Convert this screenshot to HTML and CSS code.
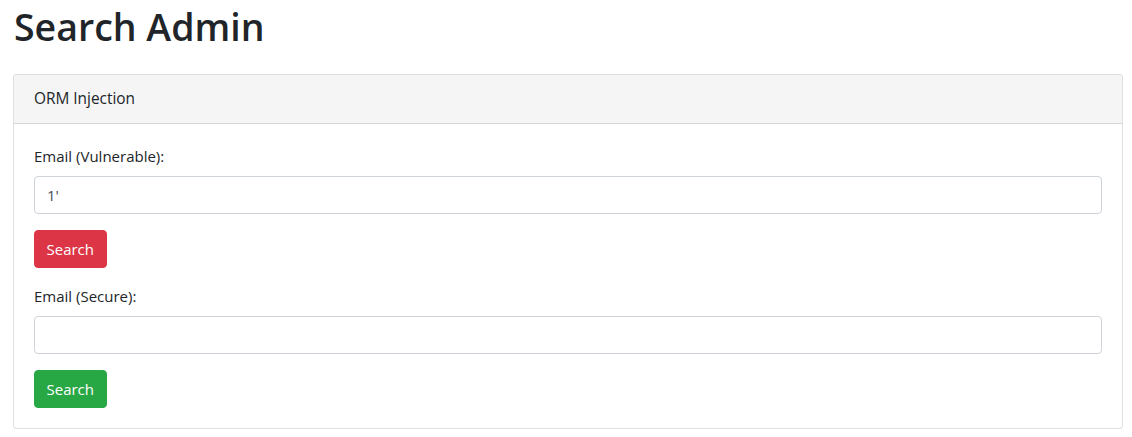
FILE: index.html
```html
<!DOCTYPE html>
<html lang="en">
<head>
<meta charset="utf-8">
<title>Search Admin</title>
<link rel="stylesheet" href="styles.css">
</head>
<body>
<div class="page">
  <h1 class="title">Search Admin</h1>
  <div class="card">
    <div class="card-header">ORM Injection</div>
    <div class="card-body">
      <form class="search-form">
        <label class="field-label" for="email-vuln">Email (Vulnerable):</label>
        <input class="form-control" id="email-vuln" type="text" value="1'">
        <button class="btn btn-danger" type="button">Search</button>
      </form>
      <form class="search-form">
        <label class="field-label" for="email-secure">Email (Secure):</label>
        <input class="form-control" id="email-secure" type="text" value="">
        <button class="btn btn-success" type="button">Search</button>
      </form>
    </div>
  </div>
</div>
</body>
</html>
```

FILE: styles.css
```css
* { box-sizing: border-box; }
html, body { margin: 0; padding: 0; background: #fff; }
body {
  font-family: "Open Sans", "Noto Sans", sans-serif;
  font-size: 15px;
  line-height: 24px;
  color: #212529;
}
.page {
  padding: 0 9px 0 13px;
}
.title {
  margin: 3px 0 23px 0;
  font-size: 37.5px;
  line-height: 48px;
  font-weight: 600;
  padding-left: 1px;
  color: #212529;
}
.card {
  border: 1px solid rgba(0,0,0,.125);
  border-radius: 4px;
  background: #fff;
}
.card-header {
  padding: 12px 20px;
  background: #f5f5f5;
  border-bottom: 1px solid rgba(0,0,0,.125);
  border-radius: 3px 3px 0 0;
  font-size: 15.4px;
}
.card-body {
  padding: 20px;
  display: flex;
  flex-direction: column;
  gap: 16px;
}
.search-form {
  display: flex;
  flex-direction: column;
  align-items: flex-start;
  margin: 0;
}
.field-label {
  display: block;
  margin-bottom: 8px;
}
.form-control {
  display: block;
  width: 100%;
  height: 38px;
  padding: 6px 12px;
  margin-bottom: 16px;
  font: inherit;
  color: #495057;
  background: #fff;
  border: 1px solid #ced4da;
  border-radius: 4px;
}
.btn {
  height: 38px;
  padding: 6px 11.5px;
  font: inherit;
  color: #fff;
  border: 1px solid transparent;
  border-radius: 4px;
  cursor: pointer;
}
.btn-danger { background: #dc3545; border-color: #dc3545; }
.btn-success { background: #28a745; border-color: #28a745; }
```
